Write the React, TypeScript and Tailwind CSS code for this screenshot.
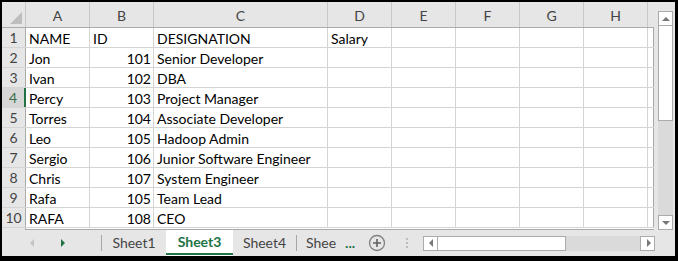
const rows: [string, string, string, string][] = [
  ["NAME", "ID", "DESIGNATION", "Salary"],
  ["Jon", "101", "Senior Developer", ""],
  ["Ivan", "102", "DBA", ""],
  ["Percy", "103", "Project Manager", ""],
  ["Torres", "104", "Associate Developer", ""],
  ["Leo", "105", "Hadoop Admin", ""],
  ["Sergio", "106", "Junior Software Engineer", ""],
  ["Chris", "107", "System Engineer", ""],
  ["Rafa", "105", "Team Lead", ""],
  ["RAFA", "108", "CEO", ""],
];

const cols = [
  { l: "A", w: "w-[64px]" },
  { l: "B", w: "w-[64px]" },
  { l: "C", w: "w-[174px]" },
  { l: "D", w: "w-[64px]" },
  { l: "E", w: "w-[64px]" },
  { l: "F", w: "w-[64px]" },
  { l: "G", w: "w-[64px]" },
  { l: "H", w: "w-[64px]" },
];

function Cell({ w, children, right }: { w: string; children?: React.ReactNode; right?: boolean }) {
  return (
    <div
      className={`${w} h-full shrink-0 border-r border-[#d4d4d4] flex items-end pb-[1px] overflow-visible whitespace-nowrap ${
        right ? "justify-end pr-[2px]" : "pl-[3px]"
      }`}
    >
      {children}
    </div>
  );
}

function Grid() {
  return (
    <div className="w-[652px] h-[228px] flex flex-col overflow-hidden bg-white">
      {/* column headers */}
      <div className="flex h-[26px] shrink-0 bg-[#e6e6e6] border-b border-[#ababab] text-[#444]">
        <div className="w-[24px] h-full shrink-0 border-r border-[#c8c8c8] relative">
          <svg className="absolute right-[3px] bottom-[3px]" width="12" height="12" viewBox="0 0 12 12">
            <polygon points="12,0 12,12 0,12" fill="#bdbdbd" />
          </svg>
        </div>
        {cols.map((c) => (
          <div key={c.l} className={`${c.w} h-full shrink-0 border-r border-[#c8c8c8] flex items-center justify-center pt-[2px]`}>
            {c.l}
          </div>
        ))}
        <div className="w-[6px] h-full shrink-0" />
      </div>
      {rows.map((r, i) => (
        <div key={i} className="flex h-[20px] shrink-0 border-b border-[#d4d4d4] text-black">
          <div
            className={`w-[24px] h-full shrink-0 flex items-center justify-center ${
              i === 3 ? "bg-[#d6d6d6] text-[#3c6e4c] border-r-2 border-[#217346]" : "bg-[#e6e6e6] text-[#444] border-r border-[#ababab]"
            }`}
          >
            {i + 1}
          </div>
          <Cell w="w-[64px]">{r[0]}</Cell>
          <Cell w="w-[64px]" right={i > 0}>
            {r[1]}
          </Cell>
          <Cell w="w-[174px]">{r[2]}</Cell>
          <Cell w="w-[64px]">{r[3]}</Cell>
          <Cell w="w-[64px]" />
          <Cell w="w-[64px]" />
          <Cell w="w-[64px]" />
          <Cell w="w-[64px]" />
          <div className="w-[6px] h-full shrink-0 border-r border-[#a8a8a8]" />
        </div>
      ))}
      <div className="flex h-[2px] shrink-0">
        <div className="w-[24px] h-full bg-[#e6e6e6] border-r border-[#ababab]" />
        <div className="flex-1 border-b border-[#a8a8a8]" />
      </div>
    </div>
  );
}

function ArrowBox({ dir }: { dir: "up" | "down" | "left" | "right" }) {
  const pts = {
    up: "1,6 9,6 5,2",
    down: "1,2 9,2 5,6",
    left: "6,1 6,9 2,5",
    right: "3,1 3,9 7,5",
  }[dir];
  const vert = dir === "up" || dir === "down";
  return (
    <div className="w-[15px] h-[15px] bg-white border border-[#ababab] flex items-center justify-center shrink-0">
      <svg width={vert ? 10 : 8} height={vert ? 8 : 10} viewBox={vert ? "0 0 10 8" : "0 0 8 10"}>
        <polygon points={pts} fill="#777" />
      </svg>
    </div>
  );
}

function VScroll() {
  return (
    <div className="w-[21px] h-[228px] bg-[#e6e6e6] pl-[4px] pr-[2px] pt-[9px] pb-[0px] flex flex-col">
      <div className="flex flex-col h-full bg-[#dadada]">
        <ArrowBox dir="up" />
        <div className="h-[95px] bg-white border border-[#ababab] border-t-0" />
        <div className="flex-1" />
        <ArrowBox dir="down" />
      </div>
    </div>
  );
}

function TabBar() {
  return (
    <div className="h-[26px] bg-[#e6e6e6] flex items-stretch text-[14px] text-[#444]">
      <div className="w-[99px] flex items-center pl-[26px] gap-[23px] shrink-0">
        <svg width="8" height="10" viewBox="0 0 8 10">
          <polygon points="6,1 6,9 2,5" fill="#c4c4c4" />
        </svg>
        <svg width="8" height="10" viewBox="0 0 8 10">
          <polygon points="2,1 2,9 6,5" fill="#217346" />
        </svg>
      </div>
      <div className="w-px bg-[#a6a6a6] my-[5px] shrink-0" />
      <div className="w-[64px] flex items-center justify-center shrink-0">Sheet1</div>
      <div className="w-[67px] bg-white flex flex-col shrink-0">
        <div className="flex-1 flex items-center justify-center font-bold text-[#217346]">Sheet3</div>
        <div className="h-[2px] bg-[#217346] mx-0 mb-[1px]" />
      </div>
      <div className="w-[63px] flex items-center justify-center shrink-0">Sheet4</div>
      <div className="w-px bg-[#a6a6a6] my-[5px] shrink-0" />
      <div className="flex items-center pl-[9px] shrink-0">Shee</div>
      <div className="flex items-center pl-[9px] text-[#217346] font-bold shrink-0">...</div>
      <div className="flex items-center pl-[13px] shrink-0">
        <svg width="18" height="18" viewBox="0 0 18 18">
          <circle cx="9" cy="9" r="7.5" fill="none" stroke="#808080" strokeWidth="1.3" />
          <path d="M9 5v8M5 9h8" stroke="#606060" strokeWidth="1.6" />
        </svg>
      </div>
      <div className="flex items-center pl-[20px] shrink-0">
        <div className="flex flex-col gap-[2px]">
          <div className="w-[2px] h-[2px] bg-[#bdbdbd]" />
          <div className="w-[2px] h-[2px] bg-[#bdbdbd]" />
          <div className="w-[2px] h-[2px] bg-[#bdbdbd]" />
        </div>
      </div>
      <div className="flex items-center pl-[15px] shrink-0">
        <div className="flex w-[232px] h-[15px] bg-[#dadada]">
          <ArrowBox dir="left" />
          <div className="w-[128px] h-full bg-white border border-[#ababab] border-l-0" />
          <div className="flex-1" />
          <ArrowBox dir="right" />
        </div>
      </div>
    </div>
  );
}

export default function App() {
  return (
    <div
      className="w-[678px] h-[261px] bg-black pt-[2px] pl-[2px] pr-[3px] pb-[5px] text-[14px] leading-none"
      style={{ fontFamily: "Lato, 'Open Sans', sans-serif" }}
    >
      <div className="w-[673px] h-[254px] flex flex-col bg-[#e6e6e6]">
        <div className="flex h-[228px]">
          <Grid />
          <VScroll />
        </div>
        <TabBar />
      </div>
    </div>
  );
}
